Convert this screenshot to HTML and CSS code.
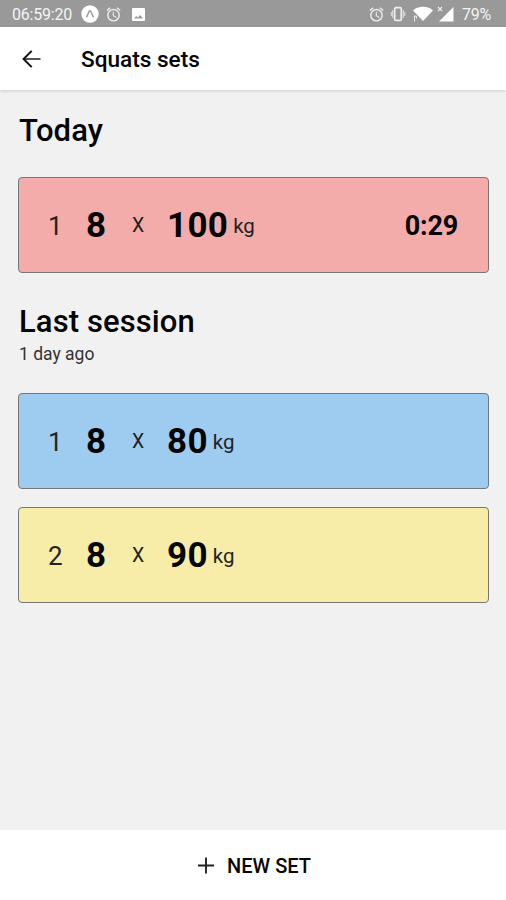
FILE: index.html
```
<!DOCTYPE html>
<html lang="en">
<head>
    <meta charset="UTF-8">
    <meta name="viewport" content="width=device-width, initial-scale=1.0">
    <title>Squats sets</title>
    <link rel="stylesheet" href="styles.css">
</head>
<body>

<div class="status-bar">
    <span class="clock">06:59:20</span>
    <svg class="icon-app" width="18" height="18" viewBox="0 0 18 18">
        <circle cx="9" cy="9" r="8.7" fill="#fff"/>
        <path d="M5.500 12.300 8.400 6h1.200l2.900 6.300" fill="none" stroke="#999" stroke-width="1.500"/>
    </svg>
    <svg class="icon-alarm" width="17" height="17" viewBox="0 0 24 24">
        <path d="M22 5.7l-4.6-3.9-1.3 1.5 4.6 3.9L22 5.7zM7.9 3.4 6.6 1.9 2 5.7l1.3 1.5 4.6-3.8zM12.5 8H11v6l4.7 2.9.8-1.2-4-2.4V8zM12 4a9 9 0 1 0 0 18 9 9 0 0 0 0-18zm0 16a7 7 0 1 1 0-14 7 7 0 0 1 0 14z" fill="#eee"/>
    </svg>
    <svg class="icon-image" width="13" height="13" viewBox="0 0 13 13">
        <rect width="13" height="13" rx="1" fill="#fff"/>
        <path d="M2 10.5 4.2 8l1.6 1.5L8.2 7 11 10.5z" fill="#999"/>
    </svg>

    <div class="status-right">
        <svg class="icon-alarm" width="17" height="17" viewBox="0 0 24 24">
            <path d="M22 5.7l-4.6-3.9-1.3 1.5 4.6 3.9L22 5.7zM7.9 3.4 6.6 1.9 2 5.7l1.3 1.5 4.6-3.8zM12.5 8H11v6l4.7 2.9.8-1.2-4-2.4V8zM12 4a9 9 0 1 0 0 18 9 9 0 0 0 0-18zm0 16a7 7 0 1 1 0-14 7 7 0 0 1 0 14z" fill="#eee"/>
        </svg>
        <svg class="icon-vibrate" width="16" height="16" viewBox="0 0 16 16">
            <rect x="4.700" y="1.700" width="6.600" height="12.600" rx="1" fill="none" stroke="#eee" stroke-width="1.700"/>
            <path d="M2.700 4v8M13.300 4v8M1.300 6v4M14.700 6v4" stroke="#ddd" stroke-width="1.100"/>
        </svg>
        <svg class="icon-wifi" width="20" height="16" viewBox="0 0 20 16">
            <path d="M0 4.500C2.600 2 6 .8 10 .8S17.400 2 20 4.500L10 15z" fill="#fff"/>
            <path d="M1.500 9.500v6M1.500 10.200h2v2.300" fill="none" stroke="#eee" stroke-width="1"/>
        </svg>
        <svg class="icon-signal" width="17" height="16" viewBox="0 0 17 16">
            <path d="M16.500 1v14.500H2z" fill="#fff"/>
            <path d="M1 1l4 4M5 1 1 5" stroke="#eee" stroke-width="1.100"/>
        </svg>
        <span class="battery">79%</span>
    </div>
</div>

<header class="header">
    <svg width="20" height="20" viewBox="0 0 20 20">
        <path d="M18.500 9H2" fill="none" stroke="#555" stroke-width="2"/>
        <path d="M9.700.9 1.600 9l8.100 8.100" fill="none" stroke="#111" stroke-width="2"/>
    </svg>
    <h1>Squats sets</h1>
</header>

<main class="content">
    <h2>Today</h2>
    <div class="set red">
        <span class="number">1</span>
        <span class="reps">8</span>
        <span class="times">X</span>
        <span class="weight">100</span>
        <span class="unit">kg</span>
        <span class="timer">0:29</span>
    </div>

    <h2 class="last-title">Last session</h2>
    <p class="ago">1 day ago</p>
    <div class="set blue">
        <span class="number">1</span>
        <span class="reps">8</span>
        <span class="times">X</span>
        <span class="weight">80</span>
        <span class="unit">kg</span>
    </div>
    <div class="set yellow">
        <span class="number">2</span>
        <span class="reps">8</span>
        <span class="times">X</span>
        <span class="weight">90</span>
        <span class="unit">kg</span>
    </div>
</main>

<button class="new-set">
    <svg width="18" height="18" viewBox="0 0 18 18">
        <path d="M9 .5v16M1 8.500h16" stroke="#222" stroke-width="1.900"/>
    </svg>
    <span>NEW SET</span>
</button>

</body>
</html>
```
FILE: styles.css
```
* {
    box-sizing: border-box;
}

body {
    margin: 0;
    height: 900px;
    display: flex;
    flex-direction: column;
    font-family: Roboto, sans-serif;
    background-color: #f1f1f1;
    color: #050505;
}

svg {
    display: block;
    flex-shrink: 0;
}

/* Status bar */
.status-bar {
    height: 27px;
    padding: 1px 15px 0 12px;
    display: flex;
    align-items: center;
    background-color: #999;
    color: #f4f4f4;
    font-size: 16px;
}

.clock {
    width: 69px;
    letter-spacing: -0.2px;
}

.icon-app {
    margin-right: 6px;
}

.status-bar > .icon-alarm {
    margin-right: 10px;
}

.status-right {
    margin-left: auto;
    display: flex;
    align-items: center;
}

.icon-vibrate {
    margin-left: 5px;
}

.icon-wifi {
    margin-left: 7px;
}

.icon-signal {
    margin-left: 4px;
}

.battery {
    width: 29px;
    margin-left: 8px;
    letter-spacing: -0.2px;
}

/* Header */
.header {
    height: 63px;
    padding: 2px 22px 0;
    display: flex;
    align-items: center;
    gap: 39px;
    background-color: #fff;
    box-shadow: 0 1px 3px rgba(0, 0, 0, 0.15);
}

h1 {
    margin: 0;
    font-size: 22.6px;
    font-weight: 500;
}

/* Sets */
.content {
    flex: 1;
    padding: 21px 17px 0 18px;
}

h2 {
    margin: 0 0 26px 1px;
    font-size: 31px;
    line-height: 40px;
    font-weight: 500;
    letter-spacing: 0.1px;
}

.last-title {
    margin-top: 29px;
    margin-bottom: 0;
}

.ago {
    margin: 0 0 26px 1px;
    font-size: 17.5px;
    line-height: 25px;
    color: #333;
}

.set {
    height: 96px;
    margin-bottom: 18px;
    padding: 1px 30px 0 29px;
    display: flex;
    align-items: center;
    border: 1px solid #777;
    border-radius: 4px;
}

.red {
    background-color: #f4acab;
}

.blue {
    background-color: #9eccf1;
}

.yellow {
    background-color: #f7eda8;
}

.number {
    width: 38px;
    font-size: 26px;
    color: #222;
}

.reps {
    width: 46px;
    font-size: 35px;
    font-weight: 700;
}

.times {
    width: 35px;
    font-size: 19.5px;
    color: #222;
}

.weight {
    font-size: 35px;
    font-weight: 700;
    letter-spacing: 0.3px;
}

.unit {
    margin-left: 5px;
    font-size: 20.5px;
    color: #222;
}

.timer {
    margin-left: auto;
    font-size: 27px;
    font-weight: 700;
    letter-spacing: -0.2px;
}

/* Bottom button */
.new-set {
    height: 70px;
    padding: 2px 0 0 2px;
    display: flex;
    justify-content: center;
    align-items: center;
    gap: 12px;
    border: none;
    background-color: #fff;
    color: #050505;
    font-family: inherit;
    font-size: 20px;
    font-weight: 500;
}
```
